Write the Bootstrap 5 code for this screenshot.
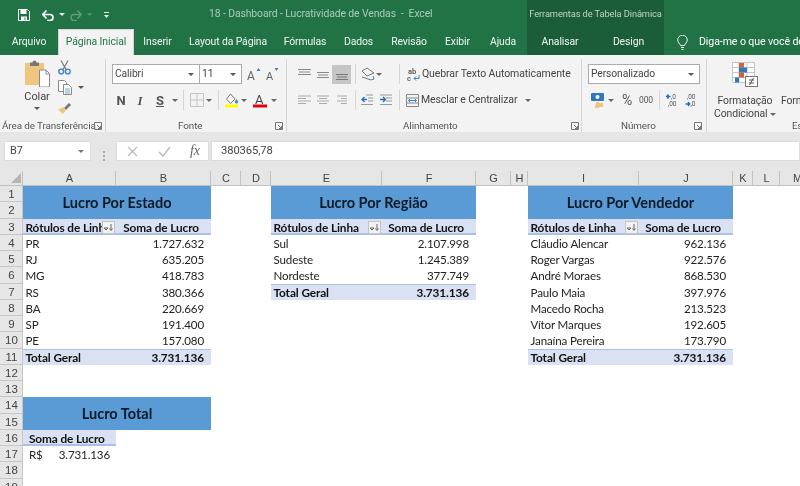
<!doctype html>
<html lang="pt-BR"><head><meta charset="utf-8"><title>18 - Dashboard - Lucratividade de Vendas - Excel</title>
<link href="https://cdn.jsdelivr.net/npm/bootstrap@5.3.0/dist/css/bootstrap.min.css" rel="stylesheet">
<style>
html,body{height:486px;overflow:hidden;background:#fff}
body{font-family:Roboto,"Liberation Sans",sans-serif;font-size:10.5px;letter-spacing:-.1px;color:#444;line-height:1.2;width:800px;filter:blur(.3px)}
svg{display:block;flex:none}
.appbar{height:55px;background:#217346;color:#fff}
.appleft{width:527px;flex:none}
.titlerow{height:29px}
.qat{padding-left:18px;width:209px;flex:none}
.doc{color:#a9cdb9;font-size:10.4px;white-space:pre}
.tabs{height:26px}
.tabs .nav-link{color:#f0f6f2;padding:0;height:26px;line-height:25px;text-align:center;font-size:10.4px;white-space:nowrap}
.tabs .nav-link.active{background:#f3f3f3;color:#217346;border:1px solid #d5d5d5;border-bottom:0;line-height:24px}
.t0{width:58px}.t1{width:76px}.t2{width:47px}.t3{width:94px}.t4{width:60px}.t5{width:47px}.t6{width:54px}.t7{width:43px}.t8{width:48px}
.ctx{width:137px;background:#1b5d39;flex:none}
.ctxlabel{height:29px;color:#b9d6c5;font-size:9.3px;line-height:27px;text-align:center;white-space:nowrap}
.t9{width:66px}.t10{width:71px}
.tell{width:136px;overflow:hidden;white-space:nowrap}
.tellrow{height:26px;padding-left:13px;margin-top:29px;font-size:10.6px}
.tellrow span{margin-left:11px}
.ribbon{height:77px;background:#f3f3f3;overflow:hidden;white-space:nowrap}
.rg{height:73px;margin-top:4px;border-right:1px solid #d6d6d6;flex:none}
.rg1{width:106px}.rg2{width:181px}.rg3{width:295px}.rg4{width:125px}.rg5{width:200px}
.rbody{height:60px;display:flow-root}
.rlabel{height:13px;font-size:9.9px;color:#555;line-height:13px;position:relative}
.launch{position:absolute;right:3px;top:3px}
.r1,.r2{height:20px}
.r1{margin-top:5px}.r2{margin-top:6px}
.sel{background:#fff;border:1px solid #ababab;height:20px;font-size:10.3px;padding-left:2px;color:#444;line-height:18px}
.s1{width:88px}.s2{width:43px;margin-left:-1px}.s3{width:112px}
.r1,.r2,.sel{display:flex;align-items:center}
.sel svg{margin-left:auto;margin-right:5px}
.sep{width:1px;height:20px;background:#d6d6d6;flex:none}
.ic{display:flex;align-items:center;justify-content:center;flex:none}
.w8{width:8px}.w10{width:10px}.w14{width:14px}.w16{width:16px}.w18{width:18px}.w20{width:20px}
.hl{width:19px;height:19px;background:#c6c6c6;margin-left:3px;flex:none;display:flex;align-items:center;justify-content:center}
.l1{margin-left:1px}.l2{margin-left:2px}.l3{margin-left:3px}.l4{margin-left:4px}.l5{margin-left:5px}.l6{margin-left:6px}.l7{margin-left:7px}.l8{margin-left:8px}.l12{margin-left:12px}.l16{margin-left:16px}.l20{margin-left:20px}
.pl6{padding-left:6px}.pl10{padding-left:10px}.pl2{padding-left:2px}
.glyph{font-weight:700;font-size:13px;color:#555;line-height:1}
.glyph2{font-size:13px;color:#555;line-height:1;font-family:"Liberation Serif",serif}
.colar{width:58px;margin-left:8px;text-align:center;padding-top:1px}
.colar .lb{font-size:11px;margin-top:3px}
.clipcol{margin-left:-8px;padding-top:1px}
.clipcol .ic{height:15px;margin-bottom:5px;justify-content:flex-start}
.bigcol{text-align:center;font-size:10.4px;line-height:13px;flex:none}
.bc1{width:70px;margin-left:3px}.bc2{width:72px}
.bigicon{height:29px;margin-top:3px;margin-bottom:3px;display:flex;justify-content:center}
.cap{display:inline-block;vertical-align:middle}
.band{height:39px;background:#e6e6e6;padding:9px 0 0 4px}
.fbox{background:#fff;border:1px solid #dcdcdc;height:20px;flex:none;color:#444;font-size:10.8px;line-height:18px}
.namebox{width:87px;padding-left:5px}
.namebox,.fnbox{display:flex;align-items:center}
.namebox svg{margin-left:auto;margin-right:6px}
.dots{width:25px;justify-content:center}
.fnbox{width:93px;padding-left:10px}
.fx{font-family:"Liberation Serif",serif;font-style:italic;font-size:14px;color:#666;margin-left:19px}
.fval{width:589px;margin-left:2px;padding-left:9px;font-size:11.2px}
.sheetwrap{height:315px;overflow:hidden;width:800px;background:#fff}
table.sheet{width:815px;table-layout:fixed;margin:0;font-family:Lato,"Liberation Sans",sans-serif;font-size:11.6px;letter-spacing:-.15px;--bs-table-bg:#fff;--bs-table-color:#222}
.c0{width:23px}.ca{width:93px}.cb{width:95px}.cc{width:30px}.cd{width:30px}.ce{width:111px}.cf{width:94px}.cg{width:35px}.ch{width:17px}.ci{width:111px}.cj{width:94px}.ck{width:20px}.cl{width:27px}.cm{width:35px}
.sheet.table>*>tr>*{padding:0 7px 0 2.5px;height:16px;line-height:15px;white-space:nowrap;vertical-align:middle;border:0;box-shadow:none;font-weight:400;overflow:hidden}
.sheet.table>*>tr.tall>*{height:17px}
.sheet.table>thead>tr>th{height:15px;background:#e6e6e6;color:#444;text-align:center;padding:0;letter-spacing:0;box-shadow:inset -1px -1px 0 #c2c2c2;font-family:"Liberation Sans",Lato,sans-serif;font-size:11px}
.sheet.table>*>tr>th.rh{background:#e6e6e6;color:#444;text-align:center;padding:0;letter-spacing:0;box-shadow:inset -1px -1px 0 #c6c6c6;font-family:"Liberation Sans",Lato,sans-serif;font-size:11.5px}
.sheet.table>thead>tr>th.corner{padding:0 2px 1px 11px}
.sheet.table>*>tr>td.title{background:#5b9bd5;color:#0b1a28;font-weight:700;font-size:14.5px;letter-spacing:0;text-align:center;padding:0}
.sheet.table>*>tr>td.hd{background:#d9e1f2;font-weight:700;color:#111;font-size:11.8px;letter-spacing:-.1px;box-shadow:inset 0 -2px 0 #a9c1e8}
.sheet.table>*>tr>td.tot{background:#d9e1f2;font-weight:700;color:#111;font-size:11.8px;letter-spacing:-.1px;box-shadow:inset 0 1px 0 #a9c1e8}
.sheet.table>*>tr>td.num{text-align:right}
.sheet.table>*>tr>td.hd.num{padding-right:12px}
.sheet.table>*>tr>td.hf{padding-right:1px}
.filt{width:13px;height:13px;background:#f2f2f2;border:1px solid #c4c4c4;flex:none;display:flex;align-items:center;justify-content:center;margin-left:auto}
.trunc{overflow:hidden;flex:1 1 auto;min-width:0}
.sheet.table>*>tr>td.ind{padding-left:6px}
.sheet.table>*>tr>td.ind2{padding-left:6px;padding-right:6px}
</style></head><body>

<header class="appbar d-flex">
 <div class="appleft">
  <div class="titlerow d-flex align-items-center">
   <div class="qat d-flex align-items-center">
    <svg width="12" height="12" viewBox="0 0 12 12"><path d="M.5.5h9l2 2v9H.5z" fill="none" stroke="#fff"/><rect x="2.500" y="1" width="6" height="4" fill="#fff"/><rect x="3" y="7.500" width="6" height="4" fill="#fff"/><rect x="6.500" y="8.500" width="1" height="2.500" fill="#217346"/></svg>
    <svg class="l12" width="12" height="12" viewBox="0 0 12 12"><path d="M1 5.500h7a3 3 0 0 1 0 6H5M4.500 1.500 .8 5.500l3.700 4" fill="none" stroke="#fff" stroke-width="1.700"/></svg>
    <svg class="l5" width="6" height="3" viewBox="0 0 6 3"><path d="M0 0h6L3 3z" fill="#e8f1ec"/></svg>
    <svg class="l5" width="12" height="12" viewBox="0 0 12 12"><path d="M11 5.500H4a3 3 0 0 0 0 6h3M7.500 1.500l3.700 4-3.700 4" fill="none" stroke="#5f9c7c" stroke-width="1.500"/></svg>
    <svg class="l5" width="5" height="3" viewBox="0 0 6 3"><path d="M0 0h6L3 3z" fill="#5f9c7c"/></svg>
    <svg class="l12" width="5" height="6" viewBox="0 0 5 6"><path d="M0 0h5v1H0zM0 3h5L2.500 6z" fill="#e8f1ec"/></svg>
   </div>
   <div class="doc">18 - Dashboard - Lucratividade de Vendas  -  Excel</div>
  </div>
  <ul class="nav tabs flex-nowrap">
   <li class="t0"><a class="nav-link" href="#">Arquivo</a></li>
   <li class="t1"><a class="nav-link active" href="#">Página Inicial</a></li>
   <li class="t2"><a class="nav-link" href="#">Inserir</a></li>
   <li class="t3"><a class="nav-link" href="#">Layout da Página</a></li>
   <li class="t4"><a class="nav-link" href="#">Fórmulas</a></li>
   <li class="t5"><a class="nav-link" href="#">Dados</a></li>
   <li class="t6"><a class="nav-link" href="#">Revisão</a></li>
   <li class="t7"><a class="nav-link" href="#">Exibir</a></li>
   <li class="t8"><a class="nav-link" href="#">Ajuda</a></li>
  </ul>
 </div>
 <div class="ctx">
  <div class="ctxlabel">Ferramentas de Tabela Dinâmica</div>
  <ul class="nav tabs flex-nowrap">
   <li class="t9"><a class="nav-link" href="#">Analisar</a></li>
   <li class="t10"><a class="nav-link" href="#">Design</a></li>
  </ul>
 </div>
 <div class="tell">
  <div class="tellrow d-flex align-items-center">
   <svg width="11" height="15" viewBox="0 0 11 15"><path d="M3.500 10.500C3 8.500 .7 7.500.7 5a4.800 4.800 0 0 1 9.600 0c0 2.500-2.300 3.500-2.800 5.500zM4 12.500h3M4.500 14.500h2" fill="none" stroke="#eef5f0"/></svg>
   <span>Diga-me o que você deseja fazer</span>
  </div>
 </div>
</header>

<section class="ribbon d-flex">
 <!-- Área de Transferência -->
 <div class="rg rg1">
  <div class="rbody d-flex">
   <div class="colar">
    <svg class="mx-auto" width="26" height="27" viewBox="0 0 26 27"><path d="M1 3h19v22H1z" fill="#eec67f"/><path d="M6 2.500h2.500a2 2 0 0 1 4 0H15V6H6z" fill="#777"/><path d="M15.500 10H22l3.500 3.500V27h-10z" fill="#fff" stroke="#8a8a8a"/><path d="M22 10v4h3.500" fill="none" stroke="#8a8a8a"/></svg>
    <div class="lb">Colar</div>
    <svg class="mx-auto mt-1" width="6" height="3" viewBox="0 0 6 3"><path d="M0 0h6L3 3z" fill="#555"/></svg>
   </div>
   <div class="clipcol">
    <div class="ic"><svg width="13" height="15" viewBox="0 0 13 15"><path d="M3 .5l5 9M10 .5l-5 9" stroke="#777" stroke-width="1.200" fill="none"/><circle cx="3.200" cy="11.500" r="2.400" fill="none" stroke="#3f83c4" stroke-width="1.400"/><circle cx="9.800" cy="11.500" r="2.400" fill="none" stroke="#3f83c4" stroke-width="1.400"/></svg></div>
    <div class="ic"><svg width="14" height="15" viewBox="0 0 14 15"><path d="M.5.500h6l2 2v9h-8z" fill="#fff" stroke="#8a8a8a"/><path d="M5.500 4.500h5l3 3v7h-8z" fill="#fff" stroke="#8a8a8a"/><path d="M7 9h5M7 11h5M7 13h5" stroke="#6ea6d8"/></svg><svg class="l6" width="6" height="3" viewBox="0 0 6 3"><path d="M0 0h6L3 3z" fill="#555"/></svg></div>
    <div class="ic"><svg width="13" height="12" viewBox="0 0 13 12"><path d="M6 6l5-5 2 2-5 5z" fill="#777"/><path d="M0 7.500 5.500 5 8 8 5 12z" fill="#eec67f"/></svg></div>
   </div>
  </div>
  <div class="rlabel pl2">Área de Transferência<svg class="launch" width="8" height="8" viewBox="0 0 8 8"><path d="M.5 7.500v-7h7v7zM3 3l3.500 3.500M4 6.500h2.500V4" fill="none" stroke="#777"/></svg></div>
 </div>
 <!-- Fonte -->
 <div class="rg rg2 pl6">
  <div class="rbody">
   <div class="r1">
    <div class="sel s1">Calibri<svg width="6" height="3" viewBox="0 0 6 3"><path d="M0 0h6L3 3z" fill="#555"/></svg></div>
    <div class="sel s2">11<svg width="6" height="3" viewBox="0 0 6 3"><path d="M0 0h6L3 3z" fill="#555"/></svg></div>
    <svg class="l5" width="15" height="15" viewBox="0 0 15 15"><text x="0" y="13" font-size="12" fill="#666" font-family="Roboto">A</text><path d="M9.500 4l2-3 2 3z" fill="#3f83c4"/></svg>
    <svg class="l3" width="15" height="15" viewBox="0 0 15 15"><text x="1" y="13" font-size="11" fill="#666" font-family="Roboto">A</text><path d="M9.500 1l2 3 2-3z" fill="#3f83c4"/></svg>
   </div>
   <div class="r2">
    <div class="ic w18 glyph">N</div>
    <div class="ic w20 glyph2 fst-italic fw-bold">I</div>
    <div class="ic w20 glyph text-decoration-underline">S</div>
    <div class="ic w10"><svg width="6" height="3" viewBox="0 0 6 3"><path d="M0 0h6L3 3z" fill="#666"/></svg></div>
    <div class="sep l3"></div>
    <svg class="l6" width="14" height="14" viewBox="0 0 14 14"><path d="M.5.500h13v13H.5zM7 .5v13M.5 7h13" fill="none" stroke="#c4c4c4"/></svg>
    <div class="ic w10"><svg width="6" height="3" viewBox="0 0 6 3"><path d="M0 0h6L3 3z" fill="#666"/></svg></div>
    <div class="sep l4"></div>
    <svg class="l6" width="14" height="15" viewBox="0 0 14 15"><path d="M5.500 1 10 6 5.500 10.500 1.500 6z" fill="#fff" stroke="#777"/><path d="M11.500 6c1 1.500 1.500 2.300 1.500 3a1.500 1.500 0 0 1-3 0c0-.7.5-1.500 1.500-3z" fill="#3f83c4"/><rect y="11.500" width="13" height="3" fill="#ff0"/></svg>
    <div class="ic w10"><svg width="6" height="3" viewBox="0 0 6 3"><path d="M0 0h6L3 3z" fill="#666"/></svg></div>
    <svg class="l4" width="14" height="16" viewBox="0 0 14 16"><text x="2" y="11.500" font-size="13" fill="#444" font-family="Roboto">A</text><rect y="12.500" width="14" height="3" fill="#e3000f"/></svg>
    <div class="ic w10 l2"><svg width="6" height="3" viewBox="0 0 6 3"><path d="M0 0h6L3 3z" fill="#666"/></svg></div>
   </div>
  </div>
  <div class="rlabel" style="padding-left:66px">Fonte<svg class="launch" width="8" height="8" viewBox="0 0 8 8"><path d="M.5 7.500v-7h7v7zM3 3l3.500 3.500M4 6.500h2.500V4" fill="none" stroke="#777"/></svg></div>
 </div>
 <!-- Alinhamento -->
 <div class="rg rg3 pl10">
  <div class="rbody">
   <div class="r1">
    <svg width="15" height="14" viewBox="0 0 15 14"><path d="M1 2.500h13M2 5h11M1 7.500h13" stroke="#888"/></svg>
    <svg class="l5" width="12" height="14" viewBox="0 0 12 14"><path d="M0 5.500h12M1 8h10M0 10.500h12" stroke="#888"/></svg>
    <div class="hl"><svg width="12" height="14" viewBox="0 0 12 14"><path d="M0 7.500h12M1 10h10M0 12.500h12" stroke="#777"/></svg></div>
    <div class="sep l4"></div>
    <svg class="l5" width="14" height="14" viewBox="0 0 14 14"><path d="M1 4l5 5 7-3-7-5zM1 10l9 3" fill="none" stroke="#777"/><path d="M10 13l3-1-1-3" fill="none" stroke="#3f83c4"/></svg>
    <div class="ic w8"><svg width="6" height="3" viewBox="0 0 6 3"><path d="M0 0h6L3 3z" fill="#666"/></svg></div>
    <div class="sep l16"></div>
    <svg class="l7" width="13" height="15" viewBox="0 0 13 15"><text x="1" y="6.500" font-size="7.500" fill="#555" font-family="Roboto" font-weight="600">ab</text><text x="0" y="14" font-size="7.500" fill="#555" font-family="Roboto" font-weight="600">c</text><path d="M12 8v3.500H7m2-2-2 2 2 2" fill="none" stroke="#3f83c4"/></svg>
    <span class="l2">Quebrar Texto Automaticamente</span>
   </div>
   <div class="r2">
    <svg class="l1" width="13" height="10" viewBox="0 0 13 10"><path d="M0 1h13M0 3.500h8M0 6h13M0 8.500h8" stroke="#aaa"/></svg>
    <svg class="l6" width="12" height="10" viewBox="0 0 12 10"><path d="M0 1h12M2 3.500h8M0 6h12M2 8.500h8" stroke="#aaa"/></svg>
    <svg class="l8" width="10" height="10" viewBox="0 0 10 10"><path d="M0 1h10M4 3.500h6M0 6h10M4 8.500h6" stroke="#aaa"/></svg>
    <div class="sep l8"></div>
    <svg class="l5" width="12" height="12" viewBox="0 0 12 12"><path d="M5 1h7M7 4h5M7 7h5M0 10.500h12" stroke="#999"/><path d="M6 5.500H1m2.500-2.500L1 5.500 3.500 8" fill="none" stroke="#1f6fc0" stroke-width="1.300"/></svg>
    <svg class="l7" width="12" height="12" viewBox="0 0 12 12"><path d="M0 1h12M6 4h6M6 7h6M0 10.500h12" stroke="#999"/><path d="M0 5.500h5M3 3l2.500 2.500L3 8" fill="none" stroke="#1f6fc0" stroke-width="1.300"/></svg>
    <div class="sep l7"></div>
    <svg class="l6" width="13" height="13" viewBox="0 0 13 13"><path d="M.5.500h12v12H.5zM.5 4h12M.5 9h12" fill="none" stroke="#888"/><path d="M2.500 6.500h8M4 5 2.500 6.500 4 8M9 5l1.500 1.500L9 8" fill="none" stroke="#3f83c4"/></svg>
    <span class="l2">Mesclar e Centralizar</span>
    <svg class="l8" width="6" height="3" viewBox="0 0 6 3"><path d="M0 0h6L3 3z" fill="#666"/></svg>
   </div>
  </div>
  <div class="rlabel" style="padding-left:106px">Alinhamento<svg class="launch" style="right:2px" width="8" height="8" viewBox="0 0 8 8"><path d="M.5 7.500v-7h7v7zM3 3l3.500 3.500M4 6.500h2.500V4" fill="none" stroke="#777"/></svg></div>
 </div>
 <!-- Número -->
 <div class="rg rg4 pl6">
  <div class="rbody">
   <div class="r1">
    <div class="sel s3">Personalizado<svg width="6" height="3" viewBox="0 0 6 3"><path d="M0 0h6L3 3z" fill="#555"/></svg></div>
   </div>
   <div class="r2">
    <svg class="l3" width="13" height="15" viewBox="0 0 13 15"><rect width="13" height="8" rx="1" fill="#2f78bd"/><circle cx="6.500" cy="4" r="2" fill="#fff"/><path d="M5 9h3v3H5zM8 10h4v4H8zM4 12h4v3H4z" fill="#eec67f"/></svg>
    <div class="ic w14"><svg width="6" height="3" viewBox="0 0 6 3"><path d="M0 0h6L3 3z" fill="#666"/></svg></div>
    <div class="ic w16 l1" style="font-size:14px;color:#555">%</div>
    <div class="ic w20 l1" style="font-size:8.500px;color:#555">000</div>
    <div class="sep l3"></div>
    <svg class="l6" width="11" height="14" viewBox="0 0 11 14"><path d="M4.500 3.500H1M2.500 1.500 .7 3.500 2.500 5.500" fill="none" stroke="#1f6fc0" stroke-width="1.400"/><text x="5" y="6" font-size="6.500" fill="#555" font-family="Roboto">,0</text><text x="2" y="13" font-size="6.500" fill="#555" font-family="Roboto">,00</text></svg>
    <svg class="l8" width="11" height="14" viewBox="0 0 11 14"><text x="2" y="6" font-size="6.500" fill="#555" font-family="Roboto">,00</text><path d="M.5 11h4M3 9l1.700 2L3 13" fill="none" stroke="#1f6fc0" stroke-width="1.400"/><text x="5.500" y="13" font-size="6.500" fill="#555" font-family="Roboto">,0</text></svg>
   </div>
  </div>
  <div class="rlabel" style="padding-left:33px">Número<svg class="launch" style="right:4px" width="8" height="8" viewBox="0 0 8 8"><path d="M.5 7.500v-7h7v7zM3 3l3.500 3.500M4 6.500h2.500V4" fill="none" stroke="#777"/></svg></div>
 </div>
 <!-- Estilos -->
 <div class="rg5 rg" style="border:0">
  <div class="rbody d-flex">
   <div class="bigcol bc1">
    <div class="bigicon"><svg width="26" height="25" viewBox="0 0 26 25"><path d="M.5.500h22v20H.5zM.5 5.500h22M.5 10.500h22M.5 15.500h22M7 .5v20M15 .5v20" fill="#fff" stroke="#c4c4c4"/><rect x="7" y="1" width="5" height="4.500" fill="#d0603a"/><rect x="7" y="5.500" width="8" height="5" fill="#2f78bd"/><rect x="7" y="10.500" width="5" height="5" fill="#d0603a"/><rect x="3" y="15.500" width="4" height="5" fill="#2f78bd"/><rect x="13.500" y="14.500" width="12" height="10" fill="#fff" stroke="#777"/><path d="M17 18h5M17 21h5M21.500 16l-4 7" stroke="#555" fill="none"/></svg></div>
    Formatação<br>Condicional <svg class="cap" width="6" height="3" viewBox="0 0 6 3"><path d="M0 0h6L3 3z" fill="#666"/></svg>
   </div>
   <div class="bigcol bc2">
    <div class="bigicon"></div>
    Formatar como<br>Tabela
   </div>
  </div>
  <div class="rlabel" style="padding-left:85px">Estilos</div>
 </div>
</section>

<section class="band d-flex">
 <div class="fbox namebox">B7<svg width="6" height="3" viewBox="0 0 6 3"><path d="M0 0h6L3 3z" fill="#777"/></svg></div>
 <div class="ic dots"><svg width="2" height="10" viewBox="0 0 2 10"><path d="M0 0h2v2H0zM0 4h2v2H0zM0 8h2v2H0z" fill="#aaa"/></svg></div>
 <div class="fbox fnbox">
  <svg width="11" height="11" viewBox="0 0 11 11"><path d="M1 1l9 9M10 1l-9 9" stroke="#bdbdbd" stroke-width="1.300"/></svg>
  <svg class="l20" width="13" height="11" viewBox="0 0 13 11"><path d="M1 6l4 4 7-9" fill="none" stroke="#bdbdbd" stroke-width="1.500"/></svg>
  <span class="fx">fx</span>
 </div>
 <div class="fbox fval">380365,78</div>
</section>

<section class="sheetwrap">
<table class="table sheet">
 <colgroup><col class="c0"><col class="ca"><col class="cb"><col class="cc"><col class="cd"><col class="ce"><col class="cf"><col class="cg"><col class="ch"><col class="ci"><col class="cj"><col class="ck"><col class="cl"><col class="cm"></colgroup>
 <thead><tr><th class="corner"><svg width="10" height="10" viewBox="0 0 10 10"><path d="M10 0v10H0z" fill="#b5b5b5"/></svg></th><th>A</th><th>B</th><th>C</th><th>D</th><th>E</th><th>F</th><th>G</th><th>H</th><th>I</th><th>J</th><th>K</th><th>L</th><th>M</th></tr></thead>
 <tbody>
  <tr><th class="rh">1</th><td class="title" colspan="2" rowspan="2">Lucro Por Estado</td><td colspan="2"></td><td class="title" colspan="2" rowspan="2">Lucro Por Região</td><td colspan="2"></td><td class="title" colspan="2" rowspan="2">Lucro Por Vendedor</td><td colspan="3"></td></tr>
  <tr class="tall"><th class="rh">2</th><td colspan="2"></td><td colspan="2"></td><td colspan="3"></td></tr>
  <tr><th class="rh">3</th><td class="hd hf"><div class="d-flex align-items-center"><span class="trunc">Rótulos de Linha</span><span class="filt"><svg width="9" height="7" viewBox="0 0 9 7"><path d="M0 4h4L2 6zM7 0v6M5.500 4.500 7 6.500l1.500-2" fill="none" stroke="#666"/></svg></span></div></td><td class="hd num">Soma de Lucro</td><td colspan="2"></td><td class="hd hf"><div class="d-flex align-items-center"><span class="trunc">Rótulos de Linha</span><span class="filt"><svg width="9" height="7" viewBox="0 0 9 7"><path d="M0 4h4L2 6zM7 0v6M5.500 4.500 7 6.500l1.500-2" fill="none" stroke="#666"/></svg></span></div></td><td class="hd num">Soma de Lucro</td><td colspan="2"></td><td class="hd hf"><div class="d-flex align-items-center"><span class="trunc">Rótulos de Linha</span><span class="filt"><svg width="9" height="7" viewBox="0 0 9 7"><path d="M0 4h4L2 6zM7 0v6M5.500 4.500 7 6.500l1.500-2" fill="none" stroke="#666"/></svg></span></div></td><td class="hd num">Soma de Lucro</td><td colspan="3"></td></tr>
  <tr><th class="rh">4</th><td>PR</td><td class="num">1.727.632</td><td colspan="2"></td><td>Sul</td><td class="num">2.107.998</td><td colspan="2"></td><td>Cláudio Alencar</td><td class="num">962.136</td><td colspan="3"></td></tr>
  <tr><th class="rh">5</th><td>RJ</td><td class="num">635.205</td><td colspan="2"></td><td>Sudeste</td><td class="num">1.245.389</td><td colspan="2"></td><td>Roger Vargas</td><td class="num">922.576</td><td colspan="3"></td></tr>
  <tr class="tall"><th class="rh">6</th><td>MG</td><td class="num">418.783</td><td colspan="2"></td><td>Nordeste</td><td class="num">377.749</td><td colspan="2"></td><td>André Moraes</td><td class="num">868.530</td><td colspan="3"></td></tr>
  <tr><th class="rh">7</th><td>RS</td><td class="num">380.366</td><td colspan="2"></td><td class="tot">Total Geral</td><td class="tot num">3.731.136</td><td colspan="2"></td><td>Paulo Maia</td><td class="num">397.976</td><td colspan="3"></td></tr>
  <tr><th class="rh">8</th><td>BA</td><td class="num">220.669</td><td colspan="4"></td><td colspan="2"></td><td>Macedo Rocha</td><td class="num">213.523</td><td colspan="3"></td></tr>
  <tr><th class="rh">9</th><td>SP</td><td class="num">191.400</td><td colspan="4"></td><td colspan="2"></td><td>Vítor Marques</td><td class="num">192.605</td><td colspan="3"></td></tr>
  <tr class="tall"><th class="rh">10</th><td>PE</td><td class="num">157.080</td><td colspan="4"></td><td colspan="2"></td><td>Janaína Pereira</td><td class="num">173.790</td><td colspan="3"></td></tr>
  <tr><th class="rh">11</th><td class="tot">Total Geral</td><td class="tot num">3.731.136</td><td colspan="4"></td><td colspan="2"></td><td class="tot">Total Geral</td><td class="tot num">3.731.136</td><td colspan="3"></td></tr>
  <tr><th class="rh">12</th><td colspan="13"></td></tr>
  <tr><th class="rh">13</th><td colspan="13"></td></tr>
  <tr class="tall"><th class="rh">14</th><td class="title" colspan="2" rowspan="2">Lucro Total</td><td colspan="11"></td></tr>
  <tr><th class="rh">15</th><td colspan="11"></td></tr>
  <tr><th class="rh">16</th><td class="hd ind">Soma de Lucro</td><td colspan="12"></td></tr>
  <tr><th class="rh">17</th><td class="ind2"><div class="d-flex justify-content-between"><span>R$</span><span>3.731.136</span></div></td><td colspan="12"></td></tr>
  <tr class="tall"><th class="rh">18</th><td colspan="13"></td></tr>
  <tr><th class="rh">19</th><td colspan="13"></td></tr>
 </tbody>
</table>
</section>
</body></html>
